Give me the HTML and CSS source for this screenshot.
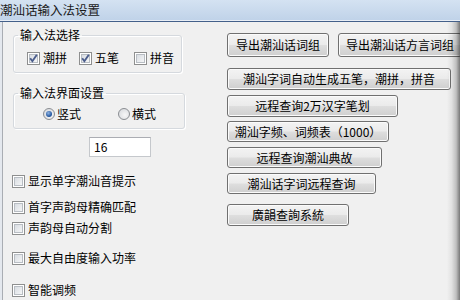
FILE: index.html
```html
<!DOCTYPE html>
<html lang="zh">
<head>
<meta charset="utf-8">
<title>潮汕话输入法设置</title>
<link rel="stylesheet" href="styles.css">
</head>
<body>
<div class="window">
  <div class="titlebar">潮汕话输入法设置</div>
  <div class="client">
    <div class="left">
      <fieldset class="group g1">
        <legend>输入法选择</legend>
        <div class="opts">
          <label class="opt o1"><span class="cb checked"><svg viewBox="0 0 11 11" width="11" height="11"><path d="M2.2 5.2 L4.4 8.2 L8.8 1.8" fill="none" stroke="#4b5d8c" stroke-width="1.9"/></svg></span>潮拼</label>
          <label class="opt o2"><span class="cb checked"><svg viewBox="0 0 11 11" width="11" height="11"><path d="M2.2 5.2 L4.4 8.2 L8.8 1.8" fill="none" stroke="#4b5d8c" stroke-width="1.9"/></svg></span>五笔</label>
          <label class="opt o3"><span class="cb"></span>拼音</label>
        </div>
      </fieldset>
      <fieldset class="group g2">
        <legend>输入法界面设置</legend>
        <div class="opts">
          <label class="opt r1"><span class="rb checked"></span>竖式</label>
          <label class="opt r2"><span class="rb"></span>横式</label>
        </div>
      </fieldset>
      <div class="field">16</div>
      <label class="opt row c1"><span class="cb"></span>显示单字潮汕音提示</label>
      <label class="opt row c2"><span class="cb"></span>首字声韵母精确匹配</label>
      <label class="opt row c3"><span class="cb"></span>声韵母自动分割</label>
      <label class="opt row c4"><span class="cb"></span>最大自由度输入功率</label>
      <label class="opt row c5"><span class="cb"></span>智能调频</label>
    </div>
    <div class="right">
      <div class="brow">
        <div class="btn b1">导出潮汕话词组</div>
        <div class="btn b2">导出潮汕话方言词组</div>
      </div>
      <div class="btn b3">潮汕字词自动生成五笔，潮拼，拼音</div>
      <div class="btn b4">远程查询2万汉字笔划</div>
      <div class="btn b5">潮汕字频、词频表（1000）</div>
      <div class="btn b6">远程查询潮汕典故</div>
      <div class="btn b7">潮汕话字词远程查询</div>
      <div class="btn b8">廣韻查詢系統</div>
    </div>
    <div class="shade"></div>
  </div>
</div>
</body>
</html>
```
FILE: styles.css
```css
* { box-sizing: border-box; }
html, body {
  margin: 0;
  padding: 0;
  width: 460px;
  height: 300px;
  overflow: hidden;
  background: #f0f0f0;
}
body {
  font-family: "Noto Sans CJK SC", "Noto Sans", sans-serif;
  font-size: 12px;
  color: #000;
}
.window {
  width: 460px;
  height: 300px;
  display: flex;
  flex-direction: column;
}
.titlebar {
  height: 22px;
  flex: none;
  padding-left: 0;
  font-size: 12.5px;
  line-height: 19px;
  color: #1a1a1a;
  background: linear-gradient(#d4e2f2, #bfd2e8);
  border-bottom: 1px solid #44608a;
  box-shadow: inset 0 -1px 0 #e8eef6;
}
.client {
  position: relative;
  flex: 1;
  display: flex;
  border-left: 2px solid #e4e8ee;
  box-shadow: inset 1px 0 0 #a9adb3;
  background: #f0f0f0;
}
.left {
  width: 222px;
  flex: none;
  padding-left: 11px;
  display: flex;
  flex-direction: column;
  align-items: flex-start;
}
.group {
  margin: 0;
  border: 1px solid #d5d9de;
  border-radius: 3px;
  box-shadow: 1px 1px 0 #fff, inset 1px 1px 0 #fff;
}
.group legend {
  padding: 0 2px;
  line-height: 14px;
  height: 14px;
}
.g1 {
  margin-top: 6px;
  width: 169px;
  padding: 9px 0 7px 13px;
}
.g1 legend { margin-left: -9px; }
.g2 {
  margin-top: 13px;
  width: 172px;
  padding: 7px 0 7px 29px;
}
.g2 legend { margin-left: -25px; }
.opts {
  display: flex;
  align-items: center;
  height: 14px;
}
.opt {
  display: flex;
  align-items: center;
  height: 14px;
  line-height: 14px;
  white-space: nowrap;
}
.cb {
  width: 13px;
  height: 13px;
  flex: none;
  margin-right: 3px;
  border: 1px solid #8e8f8f;
  background: #fff;
  position: relative;
  display: flex;
  align-items: center;
  justify-content: center;
}
.cb::before {
  content: "";
  position: absolute;
  left: 1px; top: 1px; right: 1px; bottom: 1px;
  border: 1px solid #b8bdc3;
  background: linear-gradient(135deg, #d9dde2, #f4f5f6);
}
.cb svg { position: relative; }
.o2 { margin-left: 12px; }
.o3 { margin-left: 15px; }
.rb {
  width: 12px;
  height: 12px;
  flex: none;
  margin-right: 2px;
  border-radius: 50%;
  border: 1px solid #8a8d92;
  background: radial-gradient(circle at 60% 60%, #f7f7f7, #d3d6da);
  display: flex;
  align-items: center;
  justify-content: center;
}
.rb.checked::after {
  content: "";
  width: 6px;
  height: 6px;
  border-radius: 50%;
  background: radial-gradient(circle at 40% 35%, #8fb4e3, #1b4f99 70%);
}
.r2 { margin-left: 37px; }
.field {
  margin-top: 8px;
  margin-left: 76px;
  width: 62px;
  height: 20px;
  background: #fff;
  border: 1px solid #c5c8cc;
  border-top-color: #abadb3;
  padding-left: 4px;
  line-height: 18px;
}
.row { margin-left: -1px; }
.c1 { margin-top: 17px; }
.c2 { margin-top: 12px; }
.c3 { margin-top: 7px; }
.c4 { margin-top: 16px; }
.c5 { margin-top: 18px; }
.right {
  flex: 1;
  padding-left: 3px;
  display: flex;
  flex-direction: column;
  align-items: flex-start;
}
.brow {
  display: flex;
  margin-top: 11px;
  width: 240px;
}
.btn {
  flex: none;
  border: 1px solid #707070;
  border-radius: 3px;
  background: linear-gradient(#f3f3f3 0%, #ebebeb 48%, #dedede 52%, #cfcfcf 100%);
  box-shadow: inset 0 0 0 1px #fbfbfb;
  display: flex;
  align-items: center;
  justify-content: center;
  white-space: nowrap;
  line-height: 14px;
}
.b1 { width: 102px; height: 24px; }
.b2 { width: 124px; height: 24px; margin-left: 9px; }
.b3 { width: 224px; height: 22px; margin-top: 11px; }
.b4 { width: 171px; height: 22px; margin-top: 5px; }
.b5 { width: 162px; height: 21px; margin-top: 4px; }
.b6 { width: 155px; height: 21px; margin-top: 5px; }
.b7 { width: 149px; height: 21px; margin-top: 5px; }
.b8 { width: 122px; height: 22px; margin-top: 10px; }
.shade {
  position: absolute;
  top: 0;
  right: 0;
  width: 13px;
  height: 100%;
  background: linear-gradient(90deg, rgba(0,0,0,0) 0%, rgba(0,0,0,0.06) 35%, rgba(0,0,0,0.2) 70%, rgba(0,0,0,0.5) 100%);
}
```
